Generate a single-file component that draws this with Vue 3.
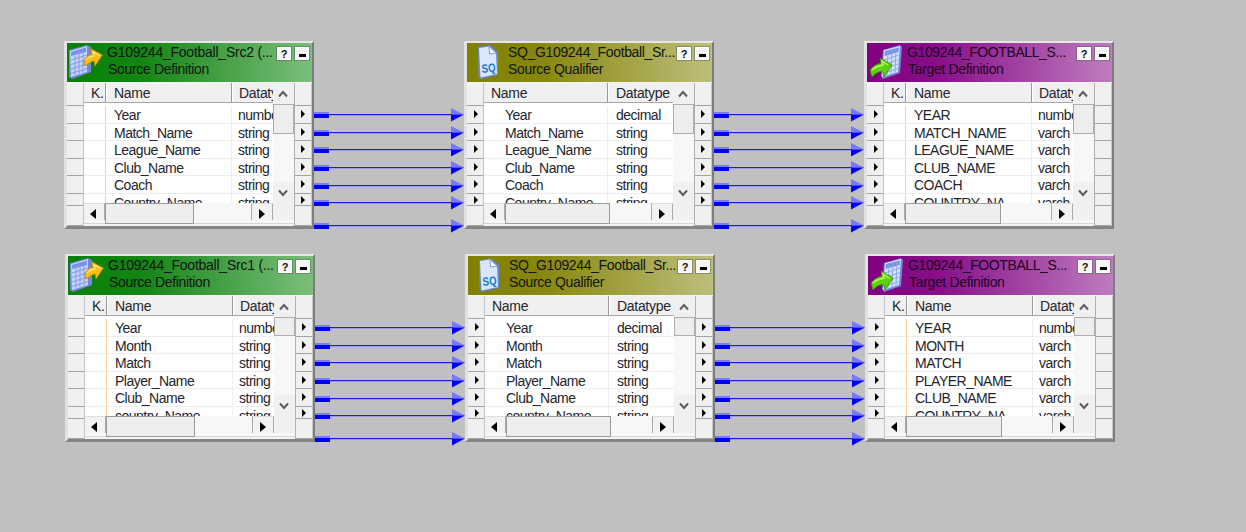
<script setup>
const upperRows = ['Year', 'Match_Name', 'League_Name', 'Club_Name', 'Coach', 'Country_Name']
const lowerRows = ['Year', 'Month', 'Match', 'Player_Name', 'Club_Name', 'country_Name']

const toRows = (names, first, rest) => names.map((name, i) => ({ name, type: i ? rest : first }))
const toTarget = (names) =>
  names.map((n) => n.toUpperCase()).map((n) => (n === 'COUNTRY_NAME' ? 'COUNTRY_NA' : n))

const lanes = [
  { id: 'upper', x: 64, y: 41, rows: upperRows, src: 'Src2', vThumb: 30 },
  { id: 'lower', x: 65, y: 254, rows: lowerRows, src: 'Src1', vThumb: 19 },
]

const nodes = lanes.flatMap((lane) => [
  {
    id: lane.id + '-source', kind: 'source', x: lane.x, y: lane.y, vThumb: lane.vThumb,
    title: `G109244_Football_${lane.src} (...`, subtitle: 'Source Definition',
    rows: toRows(lane.rows, 'number', 'string'), hThumb: 89, inPorts: false, outPorts: true,
  },
  {
    id: lane.id + '-qualifier', kind: 'qualifier', x: lane.x + 400, y: lane.y, vThumb: lane.vThumb,
    title: 'SQ_G109244_Football_Sr...', subtitle: 'Source Qualifier',
    rows: toRows(lane.rows, 'decimal', 'string'), hThumb: 105, inPorts: true, outPorts: true,
  },
  {
    id: lane.id + '-target', kind: 'target', x: lane.x + 800, y: lane.y, vThumb: lane.vThumb,
    title: 'G109244_FOOTBALL_S...', subtitle: 'Target Definition',
    rows: toRows(toTarget(lane.rows), 'number', 'varch'), hThumb: 96, inPorts: true, outPorts: false,
  },
])

const offsets = [74.5, 92, 109.5, 127, 145, 162.5, 185]
const links = lanes.flatMap((lane) =>
  [250, 650].flatMap((dx) => offsets.map((dy) => ({ x: lane.x + dx, y: Math.round(lane.y + dy - 0.1) }))),
)
</script>

<template>
  <main class="canvas">
    <section
      v-for="n in nodes"
      :key="n.id"
      class="node"
      :class="n.kind"
      :style="{ left: n.x + 'px', top: n.y + 'px' }"
    >
      <header class="title-bar">
        <svg v-if="n.kind === 'source'" class="icon" width="36" height="38" viewBox="0 0 36 38">
          <path d="M2 7 L20 2 L24 4 L24 29 L5 36 L2 34Z" fill="#7486d8" />
          <path d="M3 8 L20 3 L20 29 L4 34Z" fill="#c5d4fa" />
          <path d="M4 9 L19 4.5 V9 L4 13Z" fill="#7790e8" />
          <path d="M4 17 L20 12 M4 21.5 L20 16.5 M4 26 L20 21 M4 30.5 L20 25.5 M8 9 L8 32 M12 8 L12 31 M16 7 L16 30" stroke="#8499e3" stroke-width="1" />
          <path d="M17 18 C19 14 21 11.5 24.5 11.5 L23.5 5.5 L35.5 12 L28 23 L27 18 C24 18 22 21 18 23Z" fill="#f8bd16" stroke="#b98208" stroke-width=".8" />
          <path d="M19 17 C22 14 25 13 27 13 L26 9 L33 12.5" fill="none" stroke="#ffe169" stroke-width="1.5" />
        </svg>
        <svg v-else-if="n.kind === 'qualifier'" class="icon" width="36" height="38" viewBox="0 0 36 38">
          <path d="M11 4 L23 2.5 L31 9 L31 32 L14 36 L11.5 34Z" fill="#6c86cf" />
          <path d="M12 5 L22 3.5 L29 10 L30 31 L13.5 34.5Z" fill="#dbe6ff" />
          <path d="M22 3.5 L22.5 11 L29 10Z" fill="#fff" stroke="#8298d8" stroke-width="1" />
          <text x="15" y="30" class="sq" textLength="14" lengthAdjust="spacingAndGlyphs" transform="rotate(-6 15 30)">SQ</text>
        </svg>
        <svg v-else class="icon" width="36" height="38" viewBox="0 0 36 38">
          <path d="M16 7 L33 2 L35 4 L33 30 L16 36 L14 33Z" fill="#7486d8" />
          <path d="M17 7 L33 3 L31 29 L15 34Z" fill="#d3e1fc" />
          <path d="M18 8 L32 4.5 L31.5 9 L17.5 13Z" fill="#7790e8" />
          <path d="M17 17 L32 12 M17 21.5 L32 16.5 M16 26 L31 21 M16 30.5 L31 25.5 M21 8 L20 32 M25 7 L24 31 M29 6 L28 30" stroke="#91a8e8" stroke-width="1" />
          <path d="M3 27 C6 23 9 21 14 20 L13 15 L25 22 L17 34 L16 29 C11 28 8 31 5 34Z" fill="#5ed10e" stroke="#318a06" stroke-width=".8" />
          <path d="M5 27 C9 23 12 23 16 22 L15 18 L21 22" fill="none" stroke="#b8f763" stroke-width="1.5" />
        </svg>
        <div class="titles">
          <div class="title">{{ n.title }}</div>
          <div class="subtitle">{{ n.subtitle }}</div>
        </div>
        <div class="buttons">
          <span class="btn">?</span>
          <span class="btn"><i class="dash"></i></span>
        </div>
      </header>

      <div class="body">
        <div class="ports">
          <div class="port top"></div>
          <div v-for="(r, i) in n.rows" :key="i" class="port">
            <svg v-if="n.inPorts" width="4" height="8" viewBox="0 0 4 8"><path d="M0 0 L4 4 L0 8Z" /></svg>
          </div>
          <div class="port end"></div>
        </div>

        <div class="content">
          <div class="upper">
            <div class="table">
              <div class="row head">
                <div v-if="n.kind !== 'qualifier'" class="cell key">K.</div>
                <div class="cell name">Name</div>
                <div class="cell type">Datatype</div>
              </div>
              <div v-for="r in n.rows" :key="r.name" class="row data">
                <div v-if="n.kind !== 'qualifier'" class="cell key"></div>
                <div class="cell name">{{ r.name }}</div>
                <div class="cell type">{{ r.type }}</div>
              </div>
            </div>
            <div class="vscroll">
              <div class="vbtn">
                <svg width="10" height="8" viewBox="0 0 10 8"><path d="M1 6.5 L5 2 L9 6.5" /></svg>
              </div>
              <div class="vthumb" :style="{ height: n.vThumb + 'px' }"></div>
              <div class="vbtn down">
                <svg width="10" height="8" viewBox="0 0 10 8"><path d="M1 1.5 L5 6 L9 1.5" /></svg>
              </div>
            </div>
          </div>
          <div class="hscroll">
            <div class="hbtn"><svg width="6" height="10" viewBox="0 0 6 10"><path d="M6 0 L0 5 L6 10Z" /></svg></div>
            <div class="hthumb" :style="{ width: n.hThumb + 'px' }"></div>
            <div class="hbtn right"><svg width="6" height="10" viewBox="0 0 6 10"><path d="M0 0 L6 5 L0 10Z" /></svg></div>
            <div class="corner"></div>
          </div>
        </div>

        <div class="ports">
          <div class="port top"></div>
          <div v-for="(r, i) in n.rows" :key="i" class="port">
            <svg v-if="n.outPorts" width="4" height="8" viewBox="0 0 4 8"><path d="M0 0 L4 4 L0 8Z" /></svg>
          </div>
          <div class="port end"></div>
        </div>
      </div>
    </section>

    <svg class="links" width="1246" height="532" viewBox="0 0 1246 532">
      <g v-for="(l, i) in links" :key="i" :transform="`translate(${l.x} ${l.y})`">
        <rect x="0" y="-1" width="138" height="1" fill="#1c1ce0" />
        <rect x="0" y="0" width="138" height="1" fill="#9c9ce8" />
        <rect x="0" y="-3" width="15" height="2" fill="#7b7bf5" />
        <rect x="0" y="-1" width="15" height="4" fill="#0000fa" />
        <path d="M137 -7 L150 -.5 L137 -.5Z" fill="#7878fa" />
        <path d="M137 -.5 L150 -.5 L137 6.5Z" fill="#0000fa" />
      </g>
    </svg>
  </main>
</template>

<style>
body {
  background: #c0c0c0;
}
</style>

<style scoped>
.canvas {
  position: relative;
  width: 1246px;
  height: 532px;
  overflow: hidden;
  background: #c0c0c0;
  font-family: "Liberation Sans", Arial, sans-serif;
  font-size: 14px;
  letter-spacing: -0.5px;
  color: #25252d;
}
.canvas * {
  box-sizing: border-box;
}
.links {
  position: absolute;
  left: 0;
  top: 0;
}
.node {
  position: absolute;
  width: 250px;
  height: 188px;
  border-style: solid;
  border-width: 2px 2px 3px 3px;
  border-color: #e6e6e6 #7c7c7c #858585 #e2e2e2;
  background: #f0f0f0;
}
.title-bar {
  display: flex;
  height: 40px;
  color: #101510;
  border-bottom: 1px solid #f4f4f4;
}
.source .title-bar {
  background: linear-gradient(90deg, #088008, #138514 30%, #7cbe7c);
}
.qualifier .title-bar {
  background: linear-gradient(90deg, #808000, #87870d 30%, #bebe7c);
}
.target .title-bar {
  background: linear-gradient(90deg, #800080, #89108a 30%, #be7cbe);
  color: #210321;
}
.icon {
  flex: none;
}
.sq {
  font: bold 12px "Liberation Sans", sans-serif;
  letter-spacing: 0;
  fill: #1278c8;
}
.titles {
  flex: none;
  width: 174px;
  padding: 1px 0 0 5px;
  line-height: 17px;
  white-space: nowrap;
}
.title {
  letter-spacing: -0.24px;
}
.source .title,
.target .title {
  margin-left: -1px;
}
.qualifier .title {
  letter-spacing: -0.35px;
}
.target .title {
  letter-spacing: -0.4px;
}
.subtitle {
  letter-spacing: -0.33px;
}
.buttons {
  display: flex;
  gap: 4px;
  padding-top: 4px;
}
.btn {
  display: flex;
  justify-content: center;
  align-items: center;
  width: 14px;
  height: 13px;
  background: #f5f5f5;
  border: 1px solid #fff;
  outline: 0.5px solid #55605580;
  font-size: 11px;
  font-weight: bold;
  letter-spacing: 0;
  color: #111;
}
.dash {
  width: 7px;
  height: 3px;
  margin-top: 4px;
  background: #000;
}
.body {
  display: grid;
  grid-template-columns: 16px 211px 18px;
  height: 143px;
}
.ports {
  display: flex;
  flex-direction: column;
  background: #f0f0f0;
  overflow: hidden;
}
.port {
  display: flex;
  flex: none;
  align-items: center;
  justify-content: center;
  height: 17.5px;
  padding-left: 1px;
  border-bottom: 1px solid #a3a3a3;
}
.ports:last-child .port {
  border-left: 1px solid #b0b0b0;
  padding-right: 1px;
}
.ports:last-child {
  border-right: 1px solid #c8c8c8;
}
.port.top {
  height: 23px;
}
.port:nth-last-child(2) {
  height: 12px;
  padding-top: 2px;
}
.port.end {
  height: 20.5px;
}
.content {
  display: flex;
  flex-direction: column;
  background: #f3f3f3;
  border-left: 1px solid #c4c4c4;
}
.upper {
  display: flex;
  height: 120px;
}
.table {
  width: 189px;
  overflow: hidden;
  background: #fff;
}
.row {
  display: flex;
  width: 240px;
  white-space: nowrap;
}
.cell {
  flex: none;
}
.cell.key {
  width: 22px;
}
.cell.name {
  width: 126px;
  padding-left: 8px;
}
.cell.type {
  width: 90px;
  padding-left: 6px;
}
.head {
  height: 20px;
  margin-bottom: 3px;
  line-height: 21px;
  background: #f0f0f0;
  border-bottom: 1px solid #a8a8a8;
  letter-spacing: -0.3px;
}
.head .key {
  padding-left: 7px;
  border-right: 1px solid #999;
  box-shadow: 1px 0 #fff;
}
.head .name {
  border-right: 1px solid #999;
  box-shadow: 1px 0 #fff;
}
.head .type {
  padding-left: 7px;
}
.data {
  height: 17.5px;
  line-height: 18px;
  border-bottom: 1px solid #ededed;
}
.data .key {
  border-right: 1px solid #f9d49a;
}
.data .name {
  border-right: 1px solid #eee;
}
.qualifier .cell.name {
  width: 124px;
  padding-left: 21px;
}
.qualifier .head .name {
  padding-left: 7px;
}
.qualifier .cell.type {
  padding-left: 8px;
}
.vscroll {
  display: flex;
  flex-direction: column;
  width: 21px;
  background: #f7f7f7;
}
.vbtn {
  display: flex;
  flex: none;
  align-items: center;
  justify-content: center;
  height: 21px;
  padding-right: 1px;
  background: #f0f0f0;
}
.vbtn path {
  fill: none;
  stroke: #5c5c5c;
  stroke-width: 2;
}
.vbtn.down {
  margin-top: auto;
}
.vthumb {
  width: 21px;
  background: #ededed;
  border: 1px solid #adadad;
}
.hscroll {
  display: flex;
  height: 21px;
  background: #f7f7f7;
  border-bottom: 1px solid #d5d5da;
}
.hbtn {
  display: flex;
  flex: none;
  align-items: center;
  justify-content: center;
  width: 21px;
  height: 17px;
  padding-top: 3px;
  padding-right: 2px;
  border-top: 1px solid #ddd;
  border-right: 1px solid #aaa;
  background: #f2f2f2;
}
.hthumb {
  height: 21px;
  background: #eee;
  border: 1px solid #9c9c9c;
}
.hbtn.right {
  width: 22px;
  margin-left: auto;
  padding-right: 0;
  border-left: 1px solid #aaa;
}
.corner {
  width: 21px;
  height: 17px;
  background: #f0f0f0;
}
</style>
